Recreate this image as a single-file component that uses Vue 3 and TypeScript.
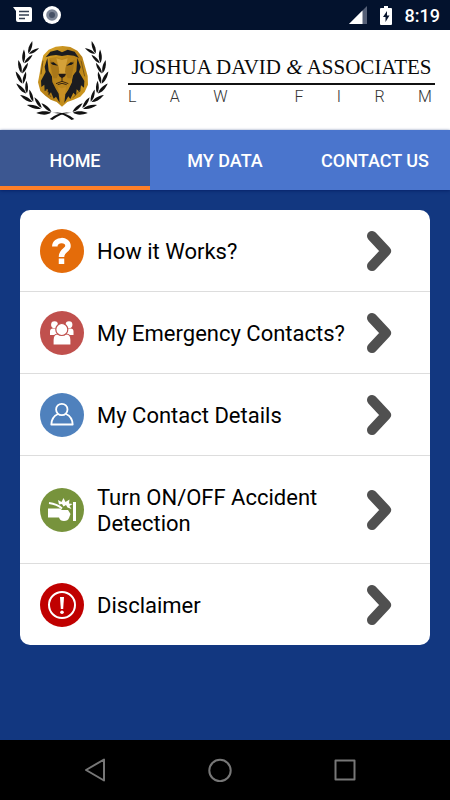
<script setup lang="ts">
import { ref } from 'vue'

type IconName = 'help' | 'group' | 'person' | 'crash' | 'alert'

interface MenuItem {
  label: string
  icon: IconName
  tone: string
}

interface Leaf {
  x: number
  y: number
  angle: number
  size: number
}

const tabs: string[] = ['HOME', 'MY DATA', 'CONTACT US']
const activeTab = ref('HOME')

const items: MenuItem[] = [
  { label: 'How it Works?', icon: 'help', tone: 'orange' },
  { label: 'My Emergency Contacts?', icon: 'group', tone: 'rose' },
  { label: 'My Contact Details', icon: 'person', tone: 'blue' },
  { label: 'Turn ON/OFF Accident Detection', icon: 'crash', tone: 'green' },
  { label: 'Disclaimer', icon: 'alert', tone: 'red' },
]

const tagline: string[] = [...'LAW FIRM']

// Leaves of one laurel branch, in pairs along an ellipse from the stem upwards
const leaves: Leaf[] = []
for (let i = 0; i < 8; i++) {
  const deg = 104 + i * 15.5
  const t = (deg * Math.PI) / 180
  const x = 161 + 121 * Math.cos(t)
  const y = 130 + 116 * Math.sin(t)
  const size = 1.2 - i * 0.02
  leaves.push({ x, y, angle: deg + 90 - 12, size })
  leaves.push({ x, y, angle: deg + 90 + 30, size: size * 0.9 })
}
</script>

<template>
  <div class="screen">
    <div class="status">
      <div class="status-group">
        <svg width="19" height="16" viewBox="0 0 19 16" aria-hidden="true">
          <path d="M0 0H17Q19 0 19 2V13Q19 15 17 15H5Q3 15 3 13V4Z" fill="#fff" />
          <path d="M6 4.500H16M6 8H16M6 11.500H12" stroke="#344052" stroke-width="1.500" />
        </svg>
        <svg width="18" height="18" viewBox="0 0 18 18" aria-hidden="true">
          <circle cx="9" cy="9" r="9" fill="#fff" />
          <circle cx="9" cy="9" r="5.800" fill="#7c8596" />
          <circle cx="9" cy="9" r="3" fill="#465166" />
        </svg>
      </div>
      <div class="status-group right">
        <svg width="18" height="18" viewBox="0 0 18 18" aria-hidden="true">
          <path d="M18 0V18H0Z" fill="#566077" />
          <path d="M13.500 4.500V18H0Z" fill="#fff" />
        </svg>
        <svg width="12" height="19" viewBox="0 0 12 19" aria-hidden="true">
          <path d="M4 0H8V2H11Q12 2 12 3V18Q12 19 11 19H1Q0 19 0 18V3Q0 2 1 2H4Z" fill="#fff" />
          <path d="M7 5L3 11H5.500V16L9.500 9.500H7Z" fill="#07132c" />
        </svg>
        <span class="time">8:19</span>
      </div>
    </div>

    <header class="brand">
      <svg class="crest" viewBox="0 0 322 288" aria-hidden="true">
        <defs>
          <path id="leaf" d="M3 0C12 -6 24 -7 40 -2C29 4 14 5 3 0Z" />
          <linearGradient id="gold" x1="0" y1="0" x2="1" y2="1">
            <stop offset="0" stop-color="#e0ac2c" />
            <stop offset=".5" stop-color="#b67f16" />
            <stop offset="1" stop-color="#d4a022" />
          </linearGradient>
          <g id="branch">
            <path d="M198 261Q168 236 132 243Q160 240 190 264Z" />
            <use
              v-for="(leaf, i) in leaves"
              :key="i"
              href="#leaf"
              :transform="`translate(${leaf.x} ${leaf.y}) rotate(${leaf.angle}) scale(${leaf.size})`"
            />
          </g>
        </defs>
        <use href="#branch" fill="#111" />
        <use href="#branch" fill="#111" transform="translate(322 0) scale(-1 1)" />
        <path
          d="M163 42L186 45L207 56L222 75L229 100L238 132L239 158L229 180L216 194L196 203L177 210L161 224L145 210L127 203L111 191L96 177L89 151L94 124L98 98L105 70L121 53L142 44Z"
          fill="url(#gold)"
        />
        <path
          d="M112 76L126 59L147 54L161 61L178 53L199 59L212 78L197 71L178 69L161 72L143 69L126 71Z"
          fill="#1b1c20"
        />
        <path
          d="M117 78L109 104L112 120L98 146L99 165L108 158L109 178L118 171L121 190L128 181L136 200L143 194L154 212L151 185L143 172L132 150L131 133L121 117Z"
          fill="#1b1c20"
        />
        <path
          d="M207 78L217 105L212 120L228 147L227 167L218 160L215 181L205 172L203 191L195 182L186 201L180 193L168 213L171 187L180 173L191 151L192 133L204 118Z"
          fill="#1b1c20"
        />
        <path d="M122 79L144 75L161 82L181 75L204 80L198 116L190 147L178 166L161 173L146 165L134 148L126 112Z" fill="#bb861d" />
        <path d="M144 79L161 84L178 79L171 110L174 126H149L152 110Z" fill="#d4a139" />
        <path d="M125 83L149 98L153 119L145 139L135 139L128 108ZM199 83L174 98L170 119L178 139L189 139L195 108Z" fill="#a97719" />
        <path d="M126 92L136 91L149 101L133 98ZM197 92L187 91L174 101L190 98Z" fill="#17171a" />
        <path d="M150 125H173L170 133L161 139L153 133Z" fill="#211915" />
        <path d="M161 137V149M143 155L161 148L180 155M148 158L161 154L175 158" fill="none" stroke="#3a2611" stroke-width="3" />
        <path d="M149 165L161 169L173 165L169 193L161 211L154 192Z" fill="#c89025" />
        <path d="M104 86L98 127M218 86L229 133M113 171L128 195M216 174L194 197" fill="none" stroke="#7c5713" stroke-width="3" />
      </svg>
      <div class="wordmark">
        <div class="name">JOSHUA DAVID <i>&amp;</i> ASSOCIATES</div>
        <div class="tagline">
          <span v-for="(letter, i) in tagline" :key="i">{{ letter }}</span>
        </div>
      </div>
    </header>

    <nav class="tabs">
      <a
        v-for="tab in tabs"
        :key="tab"
        href="#"
        class="tab"
        :class="{ active: tab === activeTab }"
        @click.prevent="activeTab = tab"
      >{{ tab }}</a>
    </nav>

    <main class="content">
      <ul class="card">
        <li v-for="item in items" :key="item.label">
          <a href="#" class="row" @click.prevent>
            <svg class="badge" :class="item.tone" viewBox="0 0 44 44" aria-hidden="true">
              <circle cx="22" cy="22" r="22" fill="currentColor" />
              <g v-if="item.icon === 'help'" fill="none" stroke="#fff" stroke-width="5.500">
                <path d="M14.800 17.500C15 10 28 9.500 28 17C28 21.500 21.500 21 21.500 28" />
                <path d="M21.500 29.500V35" />
              </g>
              <g v-else-if="item.icon === 'group'" fill="#fff">
                <circle cx="14.500" cy="13.700" r="3.400" />
                <circle cx="29" cy="13.700" r="3.400" />
                <path d="M10 24V20.500Q10 17.500 13 17.500H17V24ZM33.500 24V20.500Q33.500 17.500 30.500 17.500H26.500V24Z" />
                <g stroke="#c0504d" stroke-width="1.200">
                  <path d="M13 34V29Q13 23 18 23H26Q31 23 31 29V34Z" stroke-linejoin="round" />
                  <circle cx="21.800" cy="18.500" r="6" />
                </g>
              </g>
              <g v-else-if="item.icon === 'person'" fill="none" stroke="#fff" stroke-width="1.800">
                <circle cx="21.800" cy="16.500" r="5.700" />
                <path d="M18 21C13.500 23 11.500 26 11.300 31.500H32.700C32.500 26 30.500 23 26 21" stroke-linejoin="round" />
              </g>
              <g v-else-if="item.icon === 'crash'" fill="#fff">
                <path d="M8 20.500H20L22 22H28L30.500 26L29 30Q28 33 24 33Q20 33 19 29.500H8Z" />
                <path d="M9 15Q17 16 22 20.500" fill="none" stroke="#fff" stroke-width="2" />
                <path d="M19 16.500L18 12L21.500 14L23.500 10L25.500 14L29.500 11.500L29 15.500L32.500 16L29.500 18L31.500 21L27.500 19.500L26 17L23.500 18.500L22 16Z" />
                <path d="M33 14H36V33H33Z" />
              </g>
              <g v-else>
                <circle cx="22" cy="22" r="13" fill="none" stroke="#fff" stroke-width="2" />
                <path d="M20 14H24L23.200 26H20.800Z" fill="#fff" />
                <circle cx="22" cy="29.300" r="1.800" fill="#fff" />
              </g>
            </svg>
            <span class="label">{{ item.label }}</span>
            <svg class="chevron" viewBox="0 0 26 42" aria-hidden="true">
              <path d="M6 6L20 21L6 36" />
            </svg>
          </a>
        </li>
      </ul>
    </main>

    <div class="system-nav">
      <button type="button" aria-label="Back">
        <svg width="24" height="24" viewBox="0 0 24 24"><path d="M21 1.500V22.500L3 12Z" /></svg>
      </button>
      <button type="button" aria-label="Home">
        <svg width="24" height="24" viewBox="0 0 24 24"><circle cx="12" cy="12.500" r="10.700" /></svg>
      </button>
      <button type="button" aria-label="Recent apps">
        <svg width="24" height="24" viewBox="0 0 24 24"><path d="M2.500 2.500H21.500V21.500H2.500Z" /></svg>
      </button>
    </div>
  </div>
</template>

<style>
body {
  margin: 0;
}
</style>

<style scoped>
.screen {
  display: flex;
  flex-direction: column;
  min-height: 100vh;
  background: #123780;
  font-family: Roboto, "Liberation Sans", sans-serif;
}

.status {
  display: flex;
  align-items: center;
  justify-content: space-between;
  height: 30px;
  padding: 0 10px 0 13px;
  background: #03122d;
  color: #fff;
}

.status-group {
  display: flex;
  align-items: center;
  gap: 11px;
}

.status-group.right {
  gap: 13px;
}

.time {
  font-size: 18px;
  font-weight: 500;
}

.brand {
  display: flex;
  align-items: center;
  gap: 12px;
  height: 100px;
  padding: 0 15px 0 8px;
  background: #fff;
}

.crest {
  flex: none;
  width: 108px;
  height: 96px;
}

.wordmark {
  flex: 1;
  min-width: 0;
  color: #0a0a0a;
}

.name {
  padding-bottom: 2px;
  border-bottom: 2px solid #111;
  font-family: "Liberation Serif", serif;
  font-size: 21px;
  line-height: 28px;
  text-align: center;
  white-space: nowrap;
}

.tagline {
  display: flex;
  justify-content: space-between;
  padding: 2px 3px 0 0;
  color: #333;
  font-size: 16px;
  font-weight: 300;
  line-height: 20px;
}

.tabs {
  display: grid;
  grid-template-columns: repeat(3, 1fr);
  height: 60px;
  background: #4a75cd;
  box-shadow: 0 1px 3px #07236a;
}

.tab {
  display: flex;
  align-items: center;
  justify-content: center;
  border-bottom: 4px solid transparent;
  border-top: 4px solid transparent;
  color: #fff;
  font-size: 18px;
  font-weight: 500;
  text-decoration: none;
  white-space: nowrap;
}

.tab.active {
  border-bottom-color: #ff7f27;
  border-top-color: #3c5791;
  background: #3c5791;
}

.content {
  flex: 1;
  padding: 20px;
}

.card {
  margin: 0;
  padding: 0;
  overflow: hidden;
  border-radius: 10px;
  background: #fff;
  list-style: none;
}

.card li + li {
  border-top: 1px solid #ddd;
}

.row {
  display: flex;
  align-items: center;
  gap: 13px;
  padding: 27px 38px 26px 20px;
  color: #000;
  font-size: 22px;
  line-height: 26px;
  text-decoration: none;
}

.badge {
  flex: none;
  width: 44px;
  height: 44px;
  margin: -9px 0;
}

.orange {
  color: #e46c0a;
}

.rose {
  color: #c0504d;
}

.blue {
  color: #4f81bd;
}

.green {
  color: #77933c;
}

.red {
  color: #c00000;
}

.label {
  flex: 1;
  min-width: 0;
  padding-top: 2px;
}

.chevron {
  flex: none;
  width: 26px;
  height: 42px;
  margin: -8px 0;
  fill: none;
  stroke: #505050;
  stroke-width: 10;
  stroke-linecap: round;
  stroke-linejoin: round;
}

.system-nav {
  display: flex;
  align-items: center;
  justify-content: space-between;
  height: 60px;
  padding: 0 87px 0 77px;
  background: #000;
}

.system-nav button {
  display: flex;
  padding: 6px;
  border: 0;
  background: none;
}

.system-nav svg {
  fill: none;
  stroke: #777;
  stroke-width: 2;
  stroke-linejoin: round;
}
</style>
